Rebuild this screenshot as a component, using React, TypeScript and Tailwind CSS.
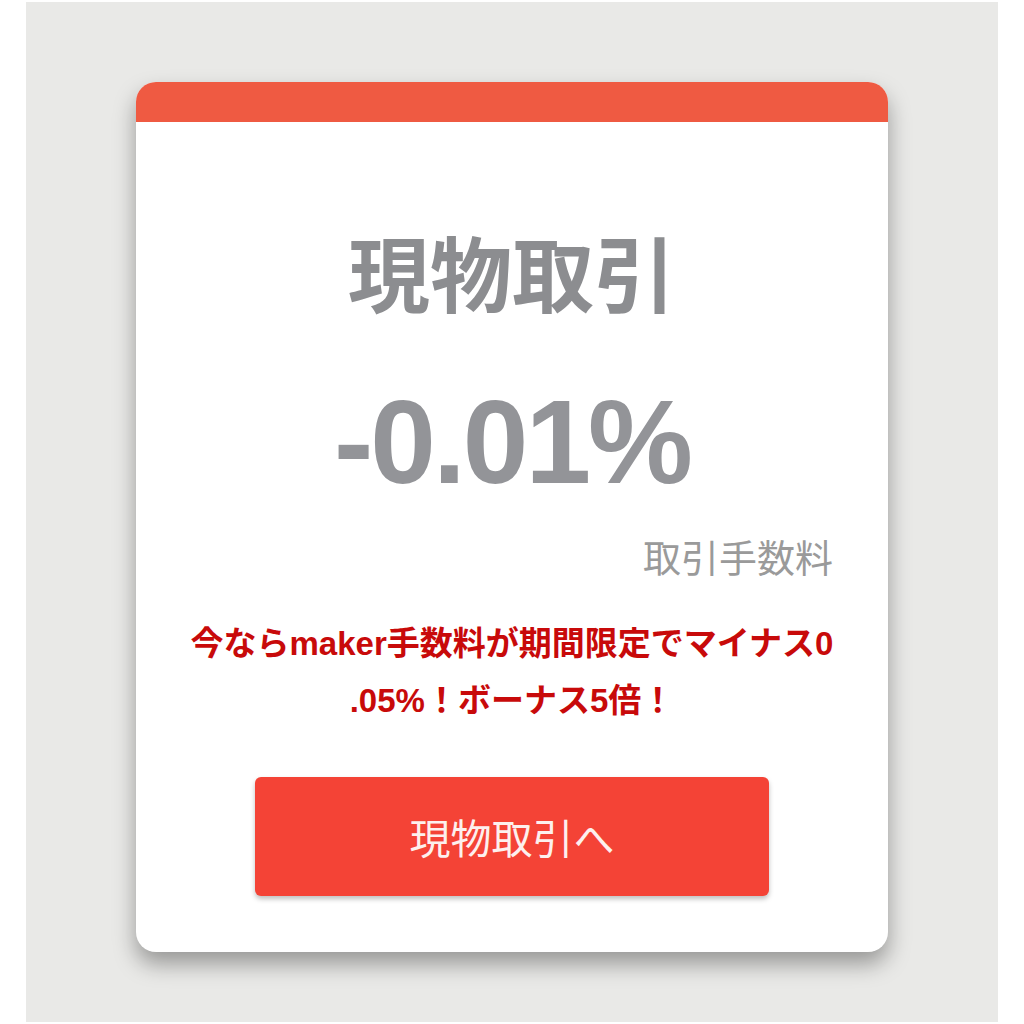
import React from "react";

function L({ children }: { children: React.ReactNode }) {
  return <span className="font-['Liberation_Sans',Arial,sans-serif] leading-none">{children}</span>;
}

export default function App() {
  return (
    <div className="w-[1024px] h-[1024px] bg-white pt-[2px] pl-[26px] overflow-hidden font-['Noto_Sans_CJK_JP','Noto_Sans',sans-serif]">
      <div className="w-[972px] h-[1020px] bg-[#e9e9e7] pt-[80px] flex justify-center">
        <div className="w-[752px] h-[870px] bg-white rounded-[20px] overflow-hidden shadow-[0_12px_22px_rgba(0,0,0,0.35)] flex flex-col">
          <div className="h-[40px] bg-[#ef5a42] shrink-0" />
          <div className="pt-[107px] flex flex-col items-center">
            <div className="text-[82px] leading-[84px] font-bold text-[#8c8d90]">現物取引</div>
            <div className="mt-[69px] text-[118px] leading-[120px] font-bold text-[#939498] tracking-[-3px] font-['Liberation_Sans',Arial,sans-serif]">
              -0.01%
            </div>
          </div>
          <div className="mt-[35px] pr-[55px] flex justify-end">
            <div className="text-[38px] leading-[38px] text-[#9a9a9a]">取引手数料</div>
          </div>
          <div className="mt-[38px] h-[114px] text-center text-[33px] leading-[57px] font-bold text-[#c80a0a]">
            <div className="h-[57px]">
              今なら<L>maker</L>手数料が期間限定でマイナス<L>0</L>
            </div>
            <div className="h-[57px]">
              <L>.05%</L>！ボーナス<L>5</L>倍！
            </div>
          </div>
          <div className="mt-[50px] flex justify-center">
            <button className="w-[514px] h-[119px] bg-[#f44336] rounded-[6px] shadow-[0_3px_5px_rgba(0,0,0,0.25)] text-[41px] text-[#fdf0ee] flex items-center justify-center">
              現物取引へ
            </button>
          </div>
        </div>
      </div>
    </div>
  );
}
